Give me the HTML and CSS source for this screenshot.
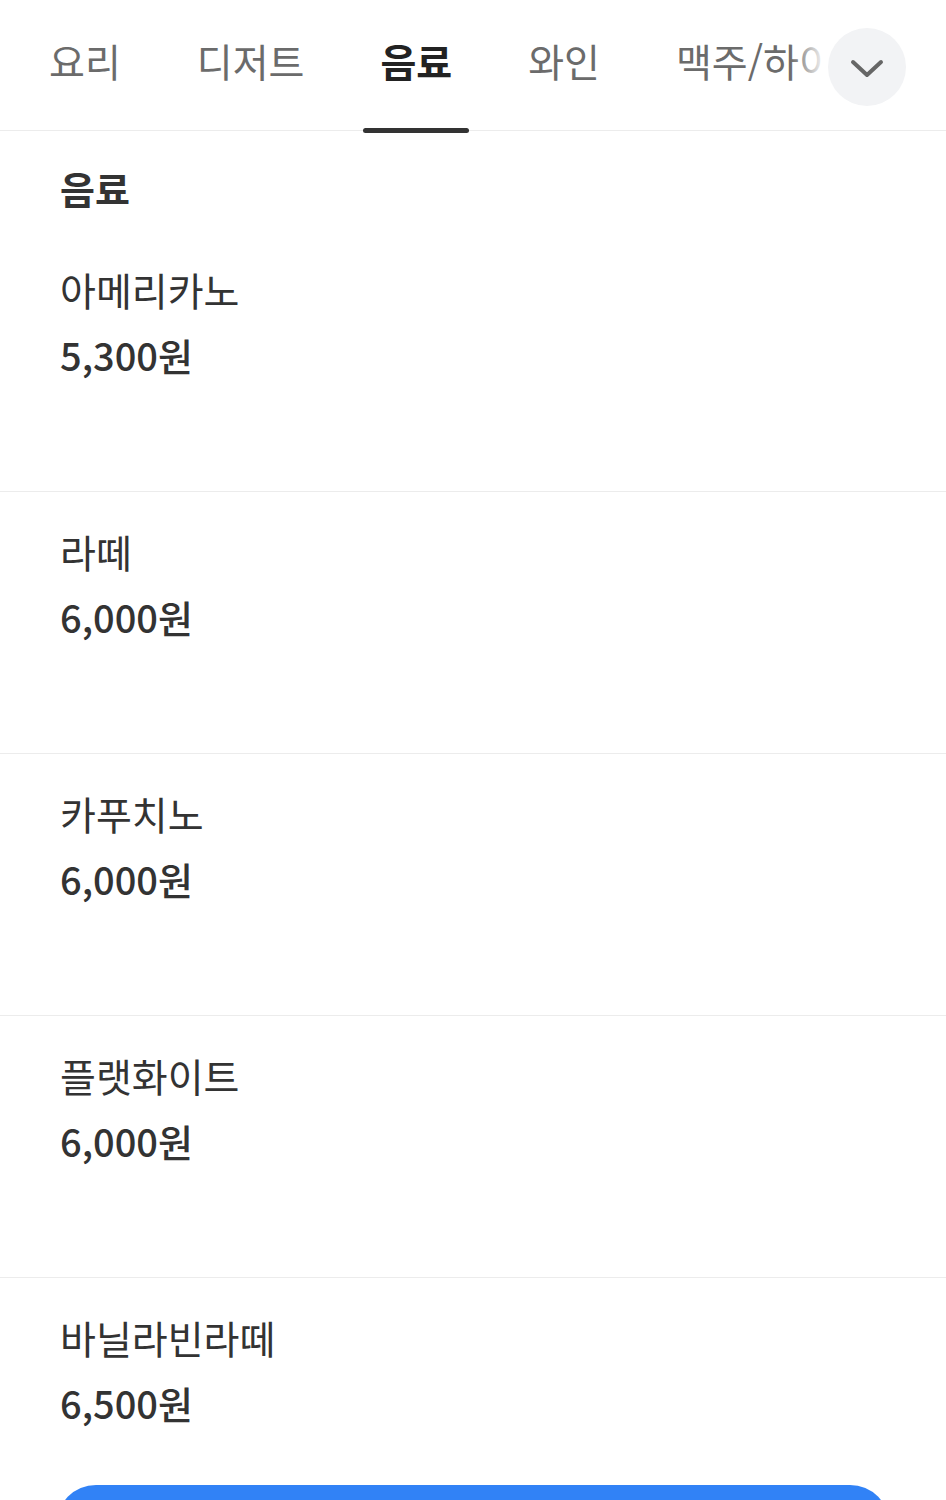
FILE: index.html
```html
<!DOCTYPE html>
<html lang="ko">

<head>
    <meta charset="UTF-8">
    <meta name="viewport" content="width=device-width, initial-scale=1.0">
    <title>메뉴</title>
    <link rel="stylesheet" href="styles.css">
</head>

<body>
    <!-- Category tabs -->
    <nav class="tabs">
        <div class="tab-list">
            <a class="tab">요리</a>
            <a class="tab">디저트</a>
            <a class="tab active">음료</a>
            <a class="tab">와인</a>
            <a class="tab">맥주/하이볼</a>
            <a class="tab">사이드</a>
        </div>
        <div class="tab-fade"></div>
        <button class="more-btn" aria-label="더보기">
            <svg width="34" height="20" viewBox="0 0 34 20">
                <path d="M3 3 L17 16 L31 3" fill="none" stroke="#666" stroke-width="4" stroke-linecap="round" stroke-linejoin="round" />
            </svg>
        </button>
    </nav>

    <section class="menu">
        <h2 class="menu-title">음료</h2>

        <div class="item">
            <p class="name">아메리카노</p>
            <p class="price">5,300원</p>
        </div>
        <div class="item">
            <p class="name">라떼</p>
            <p class="price">6,000원</p>
        </div>
        <div class="item">
            <p class="name">카푸치노</p>
            <p class="price">6,000원</p>
        </div>
        <div class="item">
            <p class="name">플랫화이트</p>
            <p class="price">6,000원</p>
        </div>
        <div class="item">
            <p class="name">바닐라빈라떼</p>
            <p class="price">6,500원</p>
        </div>
    </section>

    <!-- Floating order button -->
    <div class="bottom-bar">
        <button class="order-btn">주문하기</button>
    </div>
</body>

</html>
```

FILE: styles.css
```css
* {
    box-sizing: border-box;
}

body {
    margin: 0;
    font-family: "Noto Sans CJK KR", "Noto Sans", sans-serif;
    background: #fff;
    color: #333;
    overflow: hidden;
}

p {
    margin: 0;
}

.tabs {
    position: relative;
    height: 131px;
    border-bottom: 1px solid #ececec;
}

.tab-list {
    display: flex;
    gap: 42px;
    padding-left: 32px;
    height: 133px; /* underline sits on the border */
    overflow: hidden;
    white-space: nowrap;
}

.tab {
    display: flex;
    align-items: center;
    padding: 0 17px 14px;
    font-size: 39px;
    color: #6b6b6b;
    position: relative;
}

.tab.active {
    color: #222;
    font-weight: bold;
}

.tab.active::after {
    content: "";
    position: absolute;
    left: 0;
    right: 0;
    bottom: 0;
    height: 5px;
    border-radius: 3px;
    background: #333;
}

/* white fade before the dropdown button */
.tab-fade {
    position: absolute;
    top: 0;
    right: 0;
    width: 156px;
    height: 120px;
    background: linear-gradient(to right, rgba(255, 255, 255, 0), #fff 36px);
}

.more-btn {
    position: absolute;
    top: 28px;
    right: 40px;
    width: 78px;
    height: 78px;
    border: none;
    border-radius: 50%;
    background: #f2f3f5;
    display: flex;
    align-items: center;
    justify-content: center;
    padding: 4px 0 0;
}

.menu-title {
    margin: 0;
    padding: 32px 60px 0;
    font-size: 38px;
    line-height: 50px;
    font-weight: bold;
    color: #333;
}

.item {
    padding: 32px 60px 0;
    height: 262px;
    border-bottom: 1px solid #ececec;
}

.menu-title + .item {
    height: 279px;
    padding-top: 49px;
}

.name {
    font-size: 39px;
    line-height: 54px;
    color: #333;
}

.price {
    margin-top: 12px;
    font-size: 38px;
    line-height: 54px;
    font-weight: 500;
    color: #333;
}

.bottom-bar {
    position: fixed;
    left: 0;
    right: 0;
    top: 1485px;
    padding: 0 56px;
}

.order-btn {
    width: 100%;
    height: 92px;
    border: none;
    border-radius: 40px;
    background: #3182f6;
    color: #fff;
    font-family: inherit;
    font-size: 34px;
    font-weight: bold;
}
```
